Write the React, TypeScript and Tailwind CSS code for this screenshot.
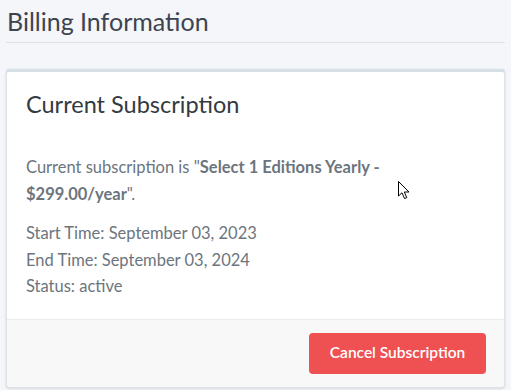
import React from "react";

const Cursor: React.FC = () => (
  <svg
    className="absolute left-[397px] top-[180px]"
    width="14"
    height="21"
    viewBox="0 0 14 21"
  >
    <path
      d="M1.5 1.5 L1.5 16 L5 12.8 L7.6 18.6 L9.8 17.6 L7.3 12 L12 12 Z"
      fill="#fff"
      stroke="#000"
      strokeWidth="1"
      strokeLinejoin="miter"
    />
  </svg>
);

const App: React.FC = () => {
  return (
    <div
      className="relative w-[511px] h-[390px] bg-[#f4f6f9] text-[#212529] overflow-hidden"
      style={{ fontFamily: "Lato, 'Noto Sans', sans-serif" }}
    >
      <div className="px-[6px]">
        <h1 className="text-[25px] leading-[42px] text-[#3d4450] pl-[1px] border-b border-[#dee2e6]">
          Billing Information
        </h1>

        {/* card */}
        <div className="mt-[26px] bg-white rounded-[4px] border border-[#dfe3e8] border-t-[3px] border-t-[#d6dee6] shadow-[0_0_1px_rgba(0,0,0,0.125),0_1px_3px_rgba(0,0,0,0.1)]">
          <div className="px-[19px] pt-[19px] pb-[10px]">
            <h3 className="text-[23.5px] leading-[27px] text-[#343a40]">
              Current Subscription
            </h3>
          </div>
          <div className="px-[19px] pt-[26px] pb-[19px] text-[16.5px] leading-[27px] text-[#6c757d]">
            <p className="mb-[12px]">
              <span>Current subscription is "</span>
              <b className="font-bold">Select 1 Editions Yearly -</b>
              <br />
              <b className="font-bold">$299.00/year</b>
              <span>".</span>
            </p>
            <p className="leading-[26.5px]">
              Start Time: September 03, 2023
              <br />
              End Time: September 03, 2024
              <br />
              Status: active
            </p>
          </div>
          <div className="flex justify-end bg-[#f8f8f8] border-t border-[#e9ecef] px-[18px] py-[13px] rounded-b-[4px]">
            <button className="h-[41px] w-[177px] rounded-[4px] bg-[#ef5052] text-white text-[15.5px] font-semibold">
              Cancel Subscription
            </button>
          </div>
        </div>
      </div>
      <Cursor />
    </div>
  );
};

export default App;
